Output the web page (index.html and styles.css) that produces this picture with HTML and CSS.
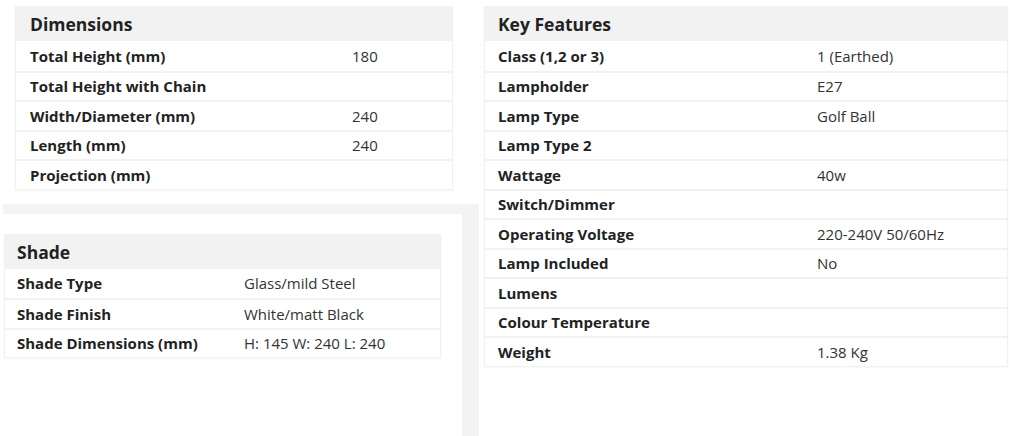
FILE: index.html
```html
<!DOCTYPE html>
<html lang="en">
<head>
<meta charset="utf-8">
<title>Specifications</title>
<link rel="stylesheet" href="styles.css">
</head>
<body>
<div class="page">
  <div class="col-left">
    <section class="spec spec-dim">
      <h2 class="spec-title">Dimensions</h2>
      <div class="spec-rows">
        <div class="row"><span class="label">Total Height (mm)</span><span class="value">180</span></div>
        <div class="row"><span class="label">Total Height with Chain</span><span class="value"></span></div>
        <div class="row"><span class="label">Width/Diameter (mm)</span><span class="value">240</span></div>
        <div class="row"><span class="label">Length (mm)</span><span class="value">240</span></div>
        <div class="row"><span class="label">Projection (mm)</span><span class="value"></span></div>
      </div>
    </section>
    <div class="panel">
      <section class="spec spec-shade">
        <h2 class="spec-title">Shade</h2>
        <div class="spec-rows">
          <div class="row"><span class="label">Shade Type</span><span class="value">Glass/mild Steel</span></div>
          <div class="row"><span class="label">Shade Finish</span><span class="value">White/matt Black</span></div>
          <div class="row"><span class="label">Shade Dimensions (mm)</span><span class="value">H: 145 W: 240 L: 240</span></div>
        </div>
      </section>
    </div>
  </div>
  <div class="col-right">
    <section class="spec spec-key">
      <h2 class="spec-title">Key Features</h2>
      <div class="spec-rows">
        <div class="row"><span class="label">Class (1,2 or 3)</span><span class="value">1 (Earthed)</span></div>
        <div class="row"><span class="label">Lampholder</span><span class="value">E27</span></div>
        <div class="row"><span class="label">Lamp Type</span><span class="value">Golf Ball</span></div>
        <div class="row"><span class="label">Lamp Type 2</span><span class="value"></span></div>
        <div class="row"><span class="label">Wattage</span><span class="value">40w</span></div>
        <div class="row"><span class="label">Switch/Dimmer</span><span class="value"></span></div>
        <div class="row"><span class="label">Operating Voltage</span><span class="value">220-240V 50/60Hz</span></div>
        <div class="row"><span class="label">Lamp Included</span><span class="value">No</span></div>
        <div class="row"><span class="label">Lumens</span><span class="value"></span></div>
        <div class="row"><span class="label">Colour Temperature</span><span class="value"></span></div>
        <div class="row"><span class="label">Weight</span><span class="value">1.38 Kg</span></div>
      </div>
    </section>
  </div>
</div>
</body>
</html>
```

FILE: styles.css
```css
* { box-sizing: border-box; }
html, body { margin: 0; padding: 0; background: #fff; }
body {
  font-family: "Open Sans", "Liberation Sans", sans-serif;
  color: #222;
  width: 1010px;
  height: 436px;
  overflow: hidden;
}
.page {
  display: flex;
  align-items: stretch;
  height: 436px;
}
.col-left {
  width: 479px;
  display: flex;
  flex-direction: column;
}
.col-right {
  flex: 1;
  padding: 6px 2px 0 5px;
}
.spec {
  border: 1px solid #f1f1f1;
  box-shadow: 0 1px 2px rgba(0,0,0,0.04);
}
.spec-title {
  margin: 0;
  height: 34px;
  background: #f2f2f2;
  font-size: 17.5px;
  font-weight: 700;
  line-height: 34px;
  color: #222;
}
.spec-rows { display: flex; flex-direction: column; }
.row {
  display: grid;
  height: 29.5px;
  align-items: center;
  border-top: 2px solid #f2f2f2;
  font-size: 15px;
}
.row:first-child { border-top: 0; }
.label { font-weight: 700; color: #222; white-space: nowrap; }
.value { font-weight: 400; color: #333; white-space: nowrap; }

.spec-dim {
  margin: 6px 0 0 15px;
  width: 438px;
}
.spec-dim .spec-title, .spec-dim .label { padding-left: 14px; }
.spec-dim .row { grid-template-columns: 336px 1fr; }

.panel {
  margin: 14px 0 0 3px;
  flex: 1;
  border-top: 10px solid #f3f3f3;
  border-right: 17px solid #f3f3f3;
  padding: 20px 0 0 1px;
}
.spec-shade { width: 437px; }
.spec-shade .spec-title, .spec-shade .label { padding-left: 12px; }
.spec-shade .row { grid-template-columns: 239px 1fr; }

.spec-key { width: 524px; }
.spec-key .spec-title, .spec-key .label { padding-left: 13px; }
.spec-key .row { grid-template-columns: 332px 1fr; }
```
